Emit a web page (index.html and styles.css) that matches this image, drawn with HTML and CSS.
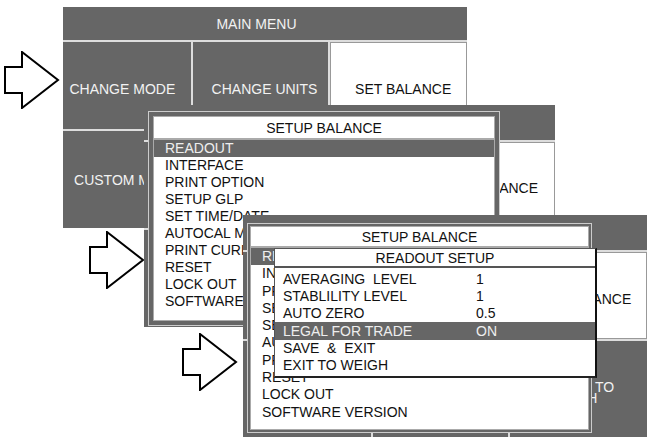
FILE: index.html
```html
<!DOCTYPE html>
<html lang="en">
<head>
  <meta charset="UTF-8">
  <title>Balance Menu Navigation</title>
  <link rel="stylesheet" href="styles.css">
</head>
<body>

<div class="canvas">

  <!-- step arrows -->
  <svg class="arrow arrow-1" viewBox="0 0 56 58"><polygon points="1,16 18,16 18,1 54,29 18,57 18,42 1,42" /></svg>
  <svg class="arrow arrow-2" viewBox="0 0 56 58"><polygon points="1,16 18,16 18,1 54,29 18,57 18,42 1,42" /></svg>
  <svg class="arrow arrow-3" viewBox="0 0 56 58"><polygon points="1,16 18,16 18,1 54,29 18,57 18,42 1,42" /></svg>

  <!-- screen 1: main menu -->
  <div class="screen screen-1">
    <div class="title">MAIN MENU</div>
    <div class="cell top left">CHANGE MODE</div>
    <div class="cell top mid">CHANGE UNITS</div>
    <div class="cell top right lite">SET BALANCE</div>
    <div class="cell">CUSTOM MENU</div>
    <div class="cell"></div>
    <div class="cell"></div>
  </div>

  <!-- screen 2: setup balance (menu mostly hidden under popup) -->
  <div class="screen screen-2">
    <div class="title"></div>
    <div class="cell"></div>
    <div class="cell"></div>
    <div class="cell top right lite">SET BALANCE</div>
    <div class="cell"></div>
    <div class="cell"></div>
    <div class="cell"></div>

    <div class="popup popup-2">
      <div class="popup-head">SETUP BALANCE</div>
      <ul class="menu">
        <li class="on">READOUT</li>
        <li>INTERFACE</li>
        <li>PRINT OPTION</li>
        <li>SETUP GLP</li>
        <li>SET TIME/DATE</li>
        <li>AUTOCAL MENU</li>
        <li>PRINT CURRENT</li>
        <li>RESET</li>
        <li>LOCK OUT</li>
        <li>SOFTWARE VERSION</li>
      </ul>
    </div>
  </div>

  <!-- screen 3: readout setup -->
  <div class="screen screen-3">
    <div class="title"></div>
    <div class="cell"></div>
    <div class="cell"></div>
    <div class="cell top right lite">SET BALANCE</div>
    <div class="cell"></div>
    <div class="cell"></div>
    <div class="cell two">RETURN TO<br>WEIGH</div>

    <div class="popup popup-3">
      <div class="popup-head">SETUP BALANCE</div>
      <ul class="menu">
        <li class="on">READOUT</li>
        <li>INTERFACE</li>
        <li>PRINT OPTION</li>
        <li>SETUP GLP</li>
        <li>SET TIME/DATE</li>
        <li>AUTOCAL MENU</li>
        <li>PRINT CURRENT</li>
        <li>RESET</li>
        <li>LOCK OUT</li>
        <li>SOFTWARE VERSION</li>
      </ul>
    </div>

    <div class="readout">
      <div class="readout-head">READOUT SETUP</div>
      <div class="settings">
        <div class="row"><span>AVERAGING  LEVEL</span><span>1</span></div>
        <div class="row"><span>STABLILITY LEVEL</span><span>1</span></div>
        <div class="row"><span>AUTO ZERO</span><span>0.5</span></div>
        <div class="row on"><span>LEGAL FOR TRADE</span><span>ON</span></div>
        <div class="row"><span>SAVE  &amp;  EXIT</span><span></span></div>
        <div class="row"><span>EXIT TO WEIGH</span><span></span></div>
      </div>
    </div>
  </div>

</div>

</body>
</html>
```

FILE: styles.css
```css
* {
  box-sizing: border-box;
}
body {
  margin: 0;
  background: #fff;
  font-family: "Liberation Sans", Arial, sans-serif;
  font-size: 14px;
  color: #111;
}
.canvas {
  position: relative;
  width: 647px;
  height: 437px;
  overflow: hidden;
}

/* arrows */
.arrow {
  position: absolute;
  width: 56px;
  height: 58px;
}
.arrow polygon {
  fill: #fff;
  stroke: #000;
  stroke-width: 2;
}
.arrow-1 { left: 4px; top: 51px; }
.arrow-2 { left: 89px; top: 231px; }
.arrow-3 { left: 182px; top: 333px; }

/* screens */
.screen {
  position: absolute;
  display: grid;
  grid-template-columns: 128fr 136fr 137fr;
  grid-template-rows: 33px 87px 1fr;
  gap: 2px;
  background: #ddd;
  overflow: hidden;
}
.screen-1 { left: 63px; top: 7px; width: 404px; height: 221px; }
.screen-2 { left: 144px; top: 105px; width: 411px; height: 222px; grid-template-rows: 35px 86px 1fr; }
.screen-3 { left: 243px; top: 215px; width: 404px; height: 222px; grid-template-rows: 35px 87px 1fr; }

.title {
  grid-column: 1 / 4;
  background: #666;
  color: #f2f2f2;
  display: flex;
  align-items: center;
  justify-content: center;
  padding-right: 17px;
}
.cell {
  background: #666;
  color: #f2f2f2;
  display: flex;
  align-items: center;
  justify-content: center;
  text-align: center;
  white-space: nowrap;
}
.cell.top { padding-top: 6px; }
.cell.left { padding-right: 9px; }
.cell.mid { padding-left: 8px; }
.cell.right { padding-left: 9px; }
.cell.lite {
  background: #fff;
  color: #111;
  border: 1px solid #999;
}
.cell.two {
  line-height: 11px;
  padding-right: 10px;
  padding-top: 8px;
}

/* setup balance popup */
.popup {
  position: absolute;
  background: #fff;
  border: 1px solid #aaa;
  box-shadow: 0 0 0 4px #666, 0 0 0 5px #ccc;
  display: flex;
  flex-direction: column;
}
.popup-2 { left: 9px; top: 11px; width: 342px; height: 205px; }
.popup-3 {
  left: 7px;
  top: 11px;
  width: 339px;
  height: 204px;
  box-shadow: 0 0 0 2px #666, 0 0 0 3px #ccc;
}
.popup-head {
  height: 23px;
  border-bottom: 2px solid #aaa;
  display: flex;
  align-items: center;
  justify-content: center;
  flex-shrink: 0;
}
.popup-3 .popup-head { height: 21px; }
.menu {
  list-style: none;
  margin: 0;
  padding: 0;
}
.menu li {
  height: 17px;
  line-height: 17px;
  padding-left: 11px;
  white-space: nowrap;
}
.popup-3 .menu li {
  height: 17.3px;
  line-height: 17.3px;
}
.menu li.on {
  background: #666;
  color: #eee;
}

/* readout setup popup */
.readout {
  position: absolute;
  left: 31px;
  top: 33px;
  width: 323px;
  height: 130px;
  background: #fff;
  border: 1px solid #555;
  border-right: 2px solid #111;
  border-bottom: 2px solid #222;
}
.readout-head {
  height: 19px;
  border-bottom: 2px solid #555;
  display: flex;
  align-items: center;
  justify-content: center;
}
.settings {
  margin-top: 3px;
}
.row {
  display: grid;
  grid-template-columns: 193px 1fr;
  padding-left: 8px;
  height: 17px;
  line-height: 17px;
  white-space: pre;
}
.row.on {
  height: 18px;
  line-height: 18px;
  background: #666;
  color: #eee;
}
```
